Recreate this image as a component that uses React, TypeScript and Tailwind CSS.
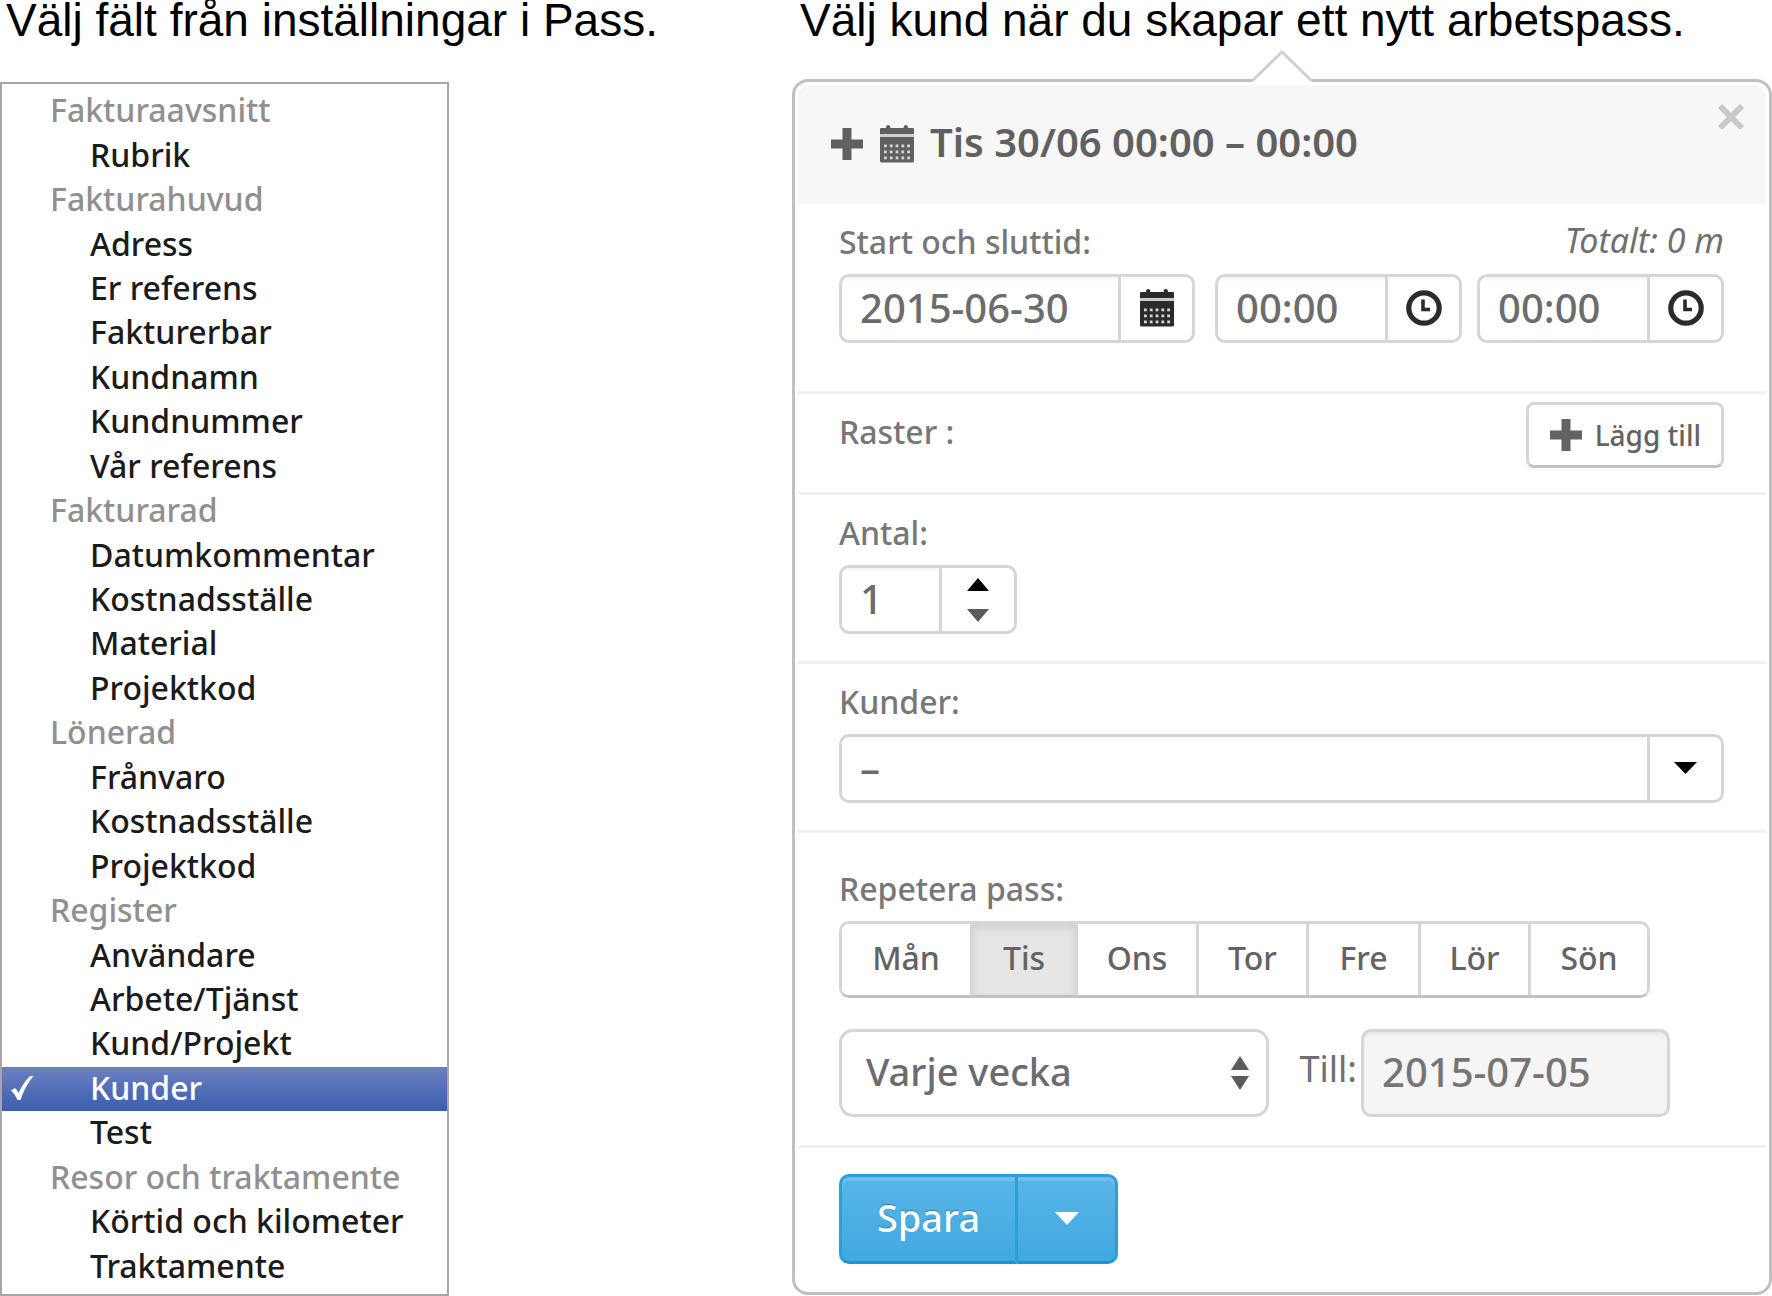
import { useState, type ReactNode } from "react";

const groups = [
  { title: "Fakturaavsnitt", items: ["Rubrik"] },
  { title: "Fakturahuvud", items: ["Adress", "Er referens", "Fakturerbar", "Kundnamn", "Kundnummer", "Vår referens"] },
  { title: "Fakturarad", items: ["Datumkommentar", "Kostnadsställe", "Material", "Projektkod"] },
  { title: "Lönerad", items: ["Frånvaro", "Kostnadsställe", "Projektkod"] },
  { title: "Register", items: ["Användare", "Arbete/Tjänst", "Kund/Projekt", "Kunder", "Test"] },
  { title: "Resor och traktamente", items: ["Körtid och kilometer", "Traktamente"] },
];

const days = [
  { name: "Mån", width: "w-[131px]" },
  { name: "Tis", width: "w-[105px]" },
  { name: "Ons", width: "w-[121px]" },
  { name: "Tor", width: "w-[110px]" },
  { name: "Fre", width: "w-[112px]" },
  { name: "Lör", width: "w-[110px]" },
  { name: "Sön", width: "w-[116px]" },
];

function Plus() {
  return (
    <svg viewBox="0 0 34 34" className="size-[34px] shrink-0" fill="currentColor" aria-hidden="true">
      <path d="M12.5 1h9v11.500H33v9H21.500V33h-9V21.500H1v-9h11.500z" />
    </svg>
  );
}

function Calendar() {
  const dots = [0, 1, 2].flatMap((r) => [0, 1, 2, 3, 4].map((c) => ({ x: 4 + c * 5.8, y: 19.5 + r * 6 })));
  return (
    <svg viewBox="0 0 34 38" className="h-[38px] w-[34px] shrink-0" aria-hidden="true">
      <path
        d="M0 4q0-1 1-1h5q0-3 2.200-3t2.200 3h13.200q0-3 2.200-3t2.200 3h5q1 0 1 1v5H0zM0 12h34v24q0 1.500-1.500 1.500h-31Q0 37.500 0 36z"
        fill="currentColor"
      />
      <path d="M0 9h34v3H0z" fill="currentColor" opacity="0.25" />
      {dots.map((d) => (
        <rect key={`${d.x}-${d.y}`} x={d.x} y={d.y} width="2.800" height="2.800" fill="#d4d4d4" />
      ))}
    </svg>
  );
}

function Clock() {
  return (
    <svg viewBox="0 0 36 36" className="size-9" fill="none" stroke="#2d2a2b" aria-hidden="true">
      <circle cx="18" cy="18" r="15.200" strokeWidth="5.200" />
      <path d="M17 9.500v10h7" strokeWidth="3.600" />
    </svg>
  );
}

function Triangle({ up = false, className }: { up?: boolean; className: string }) {
  return (
    <svg viewBox="0 0 22 12" preserveAspectRatio="none" className={className} fill="currentColor" aria-hidden="true">
      <path d={up ? "M11 0L22 12H0z" : "M0 0h22L11 12z"} />
    </svg>
  );
}

function Section({ className, children }: { className: string; children: ReactNode }) {
  return <section className={`border-b-3 border-[#f1f1f1] pr-[42px] pl-[41px] ${className}`}>{children}</section>;
}

const group = "flex h-[69px] overflow-hidden rounded-[10px] border-3 border-[#d6d6d6] bg-white";
const field =
  "min-w-0 flex-1 px-[18px] pb-0.5 text-[40px] font-medium text-[#6c6c6c] shadow-[inset_0_7px_3px_-4px_#f7f7f7] outline-none";
const addon = "flex w-[74px] shrink-0 items-center justify-center border-l-3 border-[#d6d6d6] pb-0.5 text-[#2d2a2b]";
const label = "block text-[32px] leading-10 font-medium text-[#777]";

export default function App() {
  const [selected, setSelected] = useState("4-3");
  const [day, setDay] = useState("Tis");

  return (
    <div className="grid min-h-screen grid-cols-[792fr_980fr] bg-white font-['Noto_Sans',sans-serif]">
      <div className="flex flex-col">
        <h1 className="pl-1.5 font-['Liberation_Sans',sans-serif] text-[46px] leading-10 whitespace-nowrap text-black">
          Välj fält från inställningar i Pass.
        </h1>
        <div
          role="listbox"
          aria-label="Fält"
          className="mt-[42px] flex w-[449px] flex-1 flex-col border-2 border-[#a6a6a6] bg-white py-[5px] text-[32px] font-medium"
        >
          {groups.flatMap((g, gi) => [
            <div
              key={g.title}
              role="presentation"
              className="flex flex-1 items-center pb-0.5 pl-12 leading-10 text-[#909090]"
            >
              {g.title}
            </div>,
            ...g.items.map((item, i) => {
              const id = `${gi}-${i}`;
              const on = id === selected;
              return (
                <button
                  key={id}
                  type="button"
                  role="option"
                  aria-selected={on}
                  onClick={() => setSelected(id)}
                  className={`flex flex-1 items-center pb-0.5 text-left leading-10 ${
                    on ? "bg-linear-to-b from-[#6c80c2] to-[#3a5eae] text-white" : "text-[#1b1b1b]"
                  }`}
                >
                  <span className="flex w-[88px] pl-2">
                    {on && (
                      <svg viewBox="0 0 24 26" className="h-[26px] w-6" fill="currentColor" aria-hidden="true">
                        <path d="M1 15.500l4-2.500q2.500 2.200 3.500 5Q13 8 20 1h3.500Q15 11 10.500 25H7.500Q5 19 1 15.500z" />
                      </svg>
                    )}
                  </span>
                  {item}
                </button>
              );
            }),
          ])}
        </div>
      </div>

      <div className="flex flex-col">
        <h1 className="pl-2 font-['Liberation_Sans',sans-serif] text-[46px] leading-10 whitespace-nowrap text-black">
          Välj kund när du skapar ett nytt arbetspass.
        </h1>
        <form
          aria-label="Nytt arbetspass"
          onSubmit={(e) => e.preventDefault()}
          className="relative mt-[39px] rounded-[16px] border-3 border-[#c0c0c0] bg-white p-[3px]"
        >
          <svg
            viewBox="0 0 60 34"
            className="absolute -top-8 left-1/2 h-[34px] w-[60px] -translate-x-1/2"
            aria-hidden="true"
          >
            <path d="M0 31L30 2l30 29v3H0z" fill="#fff" />
            <path d="M0 31L30 2l30 29" fill="none" stroke="#cfd0d2" strokeWidth="3" />
          </svg>

          <header className="flex h-[119px] items-start justify-between rounded-t-[12px] bg-[#f7f7f7] pr-[21px] pl-8 text-[#606060]">
            <h2 className="flex items-center pt-[30px] text-[40px] leading-[54px] font-semibold">
              <Plus />
              <span className="mx-4">
                <Calendar />
              </span>
              <span className="pb-1">Tis 30/06 00:00 – 00:00</span>
            </h2>
            <button type="button" aria-label="Stäng" className="mt-[18px] text-[#c9c9c9]">
              <svg viewBox="0 0 28 28" className="size-7" stroke="currentColor" strokeWidth="6" aria-hidden="true">
                <path d="M3 3l22 22M25 3L3 25" />
              </svg>
            </button>
          </header>

          <Section className="pt-[18px] pb-12">
            <div className="mb-3 flex justify-between">
              <label htmlFor="date" className={label}>
                Start och sluttid:
              </label>
              <em className="text-[34px] leading-9 text-[#707070]">Totalt: 0 m</em>
            </div>
            <div className="flex">
              <div className={`${group} w-[356px]`}>
                <input id="date" defaultValue="2015-06-30" className={field} />
                <button type="button" aria-label="Välj datum" className={addon}>
                  <Calendar />
                </button>
              </div>
              <div className={`${group} ml-5 w-[247px]`}>
                <input aria-label="Starttid" defaultValue="00:00" className={field} />
                <button type="button" aria-label="Välj starttid" className={addon}>
                  <Clock />
                </button>
              </div>
              <div className={`${group} ml-auto w-[247px]`}>
                <input aria-label="Sluttid" defaultValue="00:00" className={field} />
                <button type="button" aria-label="Välj sluttid" className={addon}>
                  <Clock />
                </button>
              </div>
            </div>
          </Section>

          <Section className="flex items-start justify-between pt-2 pb-6">
            <span className={`${label} pt-2.5`}>Raster :</span>
            <button
              type="button"
              className="flex h-[66px] items-center gap-3 rounded-[8px] border-3 border-[#d6d6d6] border-b-[#c2c2c2] px-5 text-[28px] font-medium text-[#636363]"
            >
              <Plus />
              Lägg till
            </button>
          </Section>

          <Section className="pt-[18px] pb-[27px]">
            <label htmlFor="count" className={`${label} mb-3`}>
              Antal:
            </label>
            <div className={`${group} w-[178px]`}>
              <input id="count" defaultValue="1" className={field} />
              <div className="flex w-[75px] shrink-0 flex-col items-center justify-center gap-[18px] border-l-3 border-[#d6d6d6]">
                <button type="button" aria-label="Öka" className="text-black">
                  <Triangle up className="h-[13px] w-[22px]" />
                </button>
                <button type="button" aria-label="Minska" className="text-[#5c5c5c]">
                  <Triangle className="h-[13px] w-[22px]" />
                </button>
              </div>
            </div>
          </Section>

          <Section className="pt-[18px] pb-[27px]">
            <label htmlFor="customer" className={`${label} mb-3`}>
              Kunder:
            </label>
            <div className={group}>
              <input id="customer" defaultValue="–" className={field} />
              <button type="button" aria-label="Visa kunder" className={addon}>
                <Triangle className="h-3 w-[23px] text-black" />
              </button>
            </div>
          </Section>

          <Section className="pt-9 pb-7">
            <span className={`${label} mb-3`}>Repetera pass:</span>
            <div className="mb-[31px] flex h-[77px] w-fit overflow-hidden rounded-[10px] border-3 border-[#d6d6d6] border-b-[#c2c2c2]">
              {days.map((d) => (
                <button
                  key={d.name}
                  type="button"
                  aria-pressed={d.name === day}
                  onClick={() => setDay(d.name)}
                  className={`${d.width} border-[#d6d6d6] pb-1 text-[32px] font-medium text-[#636363] not-last:border-r-3 ${
                    d.name === day ? "bg-[#e6e6e6] shadow-[inset_0_4px_10px_#cfcfcf]" : "bg-white"
                  }`}
                >
                  {d.name}
                </button>
              ))}
            </div>
            <div className="flex">
              <div className="relative w-[430px]">
                <select
                  aria-label="Upprepning"
                  className="h-22 w-full appearance-none rounded-[14px] border-3 border-[#d6d6d6] bg-white pb-1 pl-6 text-[38px] font-medium text-[#6c6c6c]"
                >
                  <option>Varje vecka</option>
                </select>
                <span className="pointer-events-none absolute inset-y-0 right-5 flex flex-col justify-center gap-1.5 text-[#5c5c5c]">
                  <Triangle up className="h-[14px] w-[18px]" />
                  <Triangle className="h-[14px] w-[18px]" />
                </span>
              </div>
              <label htmlFor="until" className="mr-1 ml-auto pt-4 text-[36px] leading-12 text-[#707070]">
                Till:
              </label>
              <input
                id="until"
                readOnly
                value="2015-07-05"
                className="mr-[54px] h-22 w-[309px] rounded-[10px] border-3 border-[#d6d6d6] bg-[#f5f5f5] px-[18px] pb-1 text-[40px] font-medium text-[#757575] shadow-[inset_0_4px_4px_-2px_#e4e4e4]"
              />
            </div>
          </Section>

          <div className="flex px-[41px] pt-[26px] pb-[25px]">
            <button
              type="submit"
              className="h-[90px] w-[179px] rounded-l-[10px] border-3 border-[#2b9fd9] border-b-[#1f94cd] bg-linear-to-b from-[#58b5e6] to-[#41a9e1] pb-1 text-[38px] font-medium text-white inset-shadow-[0_4px_#6dbeea] text-shadow-[0_-1px_1px_#2a7fb0]"
            >
              Spara
            </button>
            <button
              type="button"
              aria-label="Fler alternativ"
              className="flex h-[90px] w-[100px] items-center justify-center rounded-r-[10px] border-3 border-l-0 border-[#2b9fd9] border-b-[#1f94cd] bg-linear-to-b from-[#58b5e6] to-[#41a9e1] pb-0.5 text-white inset-shadow-[0_4px_#6dbeea]"
            >
              <Triangle className="h-[13px] w-6" />
            </button>
          </div>
        </form>
      </div>
    </div>
  );
}
